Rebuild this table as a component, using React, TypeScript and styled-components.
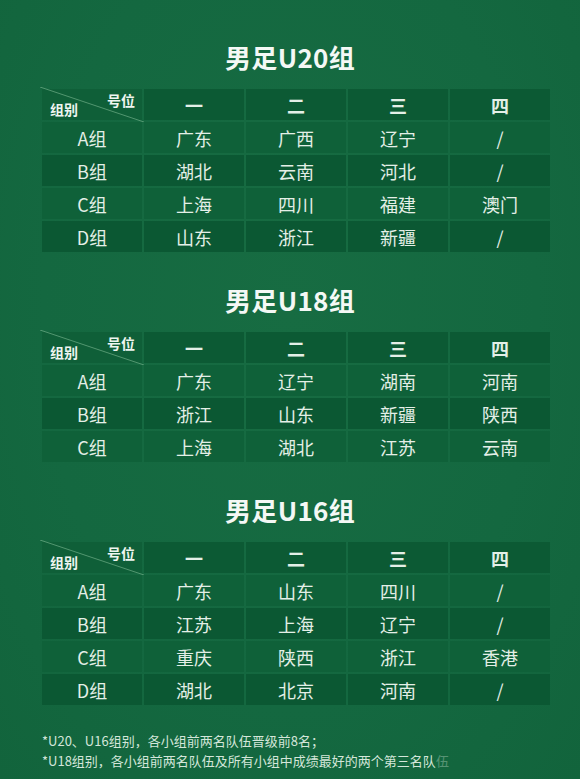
import React from "react";
import styled, { createGlobalStyle } from "styled-components";

const Global = createGlobalStyle`
  html, body { margin: 0; padding: 0; }
  body {
    background: #15693f;
    font-family: "Noto Sans CJK SC", "Noto Sans", sans-serif;
    color: #e6f1e9;
  }
`;

const Page = styled.div`
  width: 580px;
  height: 779px;
  box-sizing: border-box;
  padding-top: 40px;
  background: radial-gradient(ellipse at 50% 40%, #176c42 0%, #146840 60%, #12643c 100%);
  overflow: hidden;
`;

const Section = styled.section`
  display: flex;
  flex-direction: column;
  & + & {
    margin-top: 31px;
  }
`;

const Title = styled.h2`
  margin: 0 0 15px 0;
  height: 34px;
  line-height: 34px;
  text-align: center;
  font-size: 26px;
  font-weight: 700;
  color: #f4f8f5;
  letter-spacing: 0.3px;
`;

const Grid = styled.div`
  margin-left: 42px;
  width: 508px;
  display: grid;
  grid-template-columns: repeat(5, 100px);
  grid-auto-rows: 31px;
  gap: 2px;
`;

const Cell = styled.div<{ $tone: "head" | "odd" | "even" }>`
  display: flex;
  align-items: center;
  justify-content: center;
  font-size: 18px;
  font-weight: ${(p) => (p.$tone === "head" ? 700 : 400)};
  color: #e4efe7;
  background: ${(p) =>
    p.$tone === "head" ? "#0c5a34" : p.$tone === "odd" ? "#0f6139" : "#0b5833"};
`;

const Corner = styled.div`
  position: relative;
  background: #0f5f38;
  overflow: visible;
`;

const Diagonal = styled.svg`
  position: absolute;
  left: -2px;
  top: -2px;
  width: 104px;
  height: 35px;
  pointer-events: none;
`;

const CornerTop = styled.span`
  position: absolute;
  right: 7px;
  top: 1px;
  font-size: 14px;
  font-weight: 700;
  color: #eef5f0;
`;

const CornerBottom = styled.span`
  position: absolute;
  left: 8px;
  bottom: 1px;
  font-size: 14px;
  font-weight: 700;
  color: #eef5f0;
`;

const Notes = styled.div`
  margin: 26px 0 0 42px;
  font-size: 13px;
  line-height: 20px;
  color: #d4e6da;
`;

const Faded = styled.span`
  opacity: 0.35;
`;

type Table = { title: string; rows: string[][] };

const tables: Table[] = [
  {
    title: "男足U20组",
    rows: [
      ["A组", "广东", "广西", "辽宁", "/"],
      ["B组", "湖北", "云南", "河北", "/"],
      ["C组", "上海", "四川", "福建", "澳门"],
      ["D组", "山东", "浙江", "新疆", "/"],
    ],
  },
  {
    title: "男足U18组",
    rows: [
      ["A组", "广东", "辽宁", "湖南", "河南"],
      ["B组", "浙江", "山东", "新疆", "陕西"],
      ["C组", "上海", "湖北", "江苏", "云南"],
    ],
  },
  {
    title: "男足U16组",
    rows: [
      ["A组", "广东", "山东", "四川", "/"],
      ["B组", "江苏", "上海", "辽宁", "/"],
      ["C组", "重庆", "陕西", "浙江", "香港"],
      ["D组", "湖北", "北京", "河南", "/"],
    ],
  },
];

const heads = ["一", "二", "三", "四"];

export default function App() {
  return (
    <>
      <Global />
      <Page>
        {tables.map((t) => (
          <Section key={t.title}>
            <Title>{t.title}</Title>
            <Grid>
              <Corner>
                <Diagonal viewBox="0 0 104 35">
                  <line x1="0" y1="0" x2="104" y2="35" stroke="#6fae88" strokeOpacity="0.7" strokeWidth="1" />
                </Diagonal>
                <CornerTop>号位</CornerTop>
                <CornerBottom>组别</CornerBottom>
              </Corner>
              {heads.map((h) => (
                <Cell key={h} $tone="head">
                  {h}
                </Cell>
              ))}
              {t.rows.map((r, i) =>
                r.map((c, j) => (
                  <Cell key={`${i}-${j}`} $tone={i % 2 === 0 ? "odd" : "even"}>
                    {c}
                  </Cell>
                ))
              )}
            </Grid>
          </Section>
        ))}
        <Notes>
          <div>*U20、U16组别，各小组前两名队伍晋级前8名；</div>
          <div>
            *U18组别，各小组前两名队伍及所有小组中成绩最好的两个第三名队<Faded>伍</Faded>
          </div>
        </Notes>
      </Page>
    </>
  );
}
